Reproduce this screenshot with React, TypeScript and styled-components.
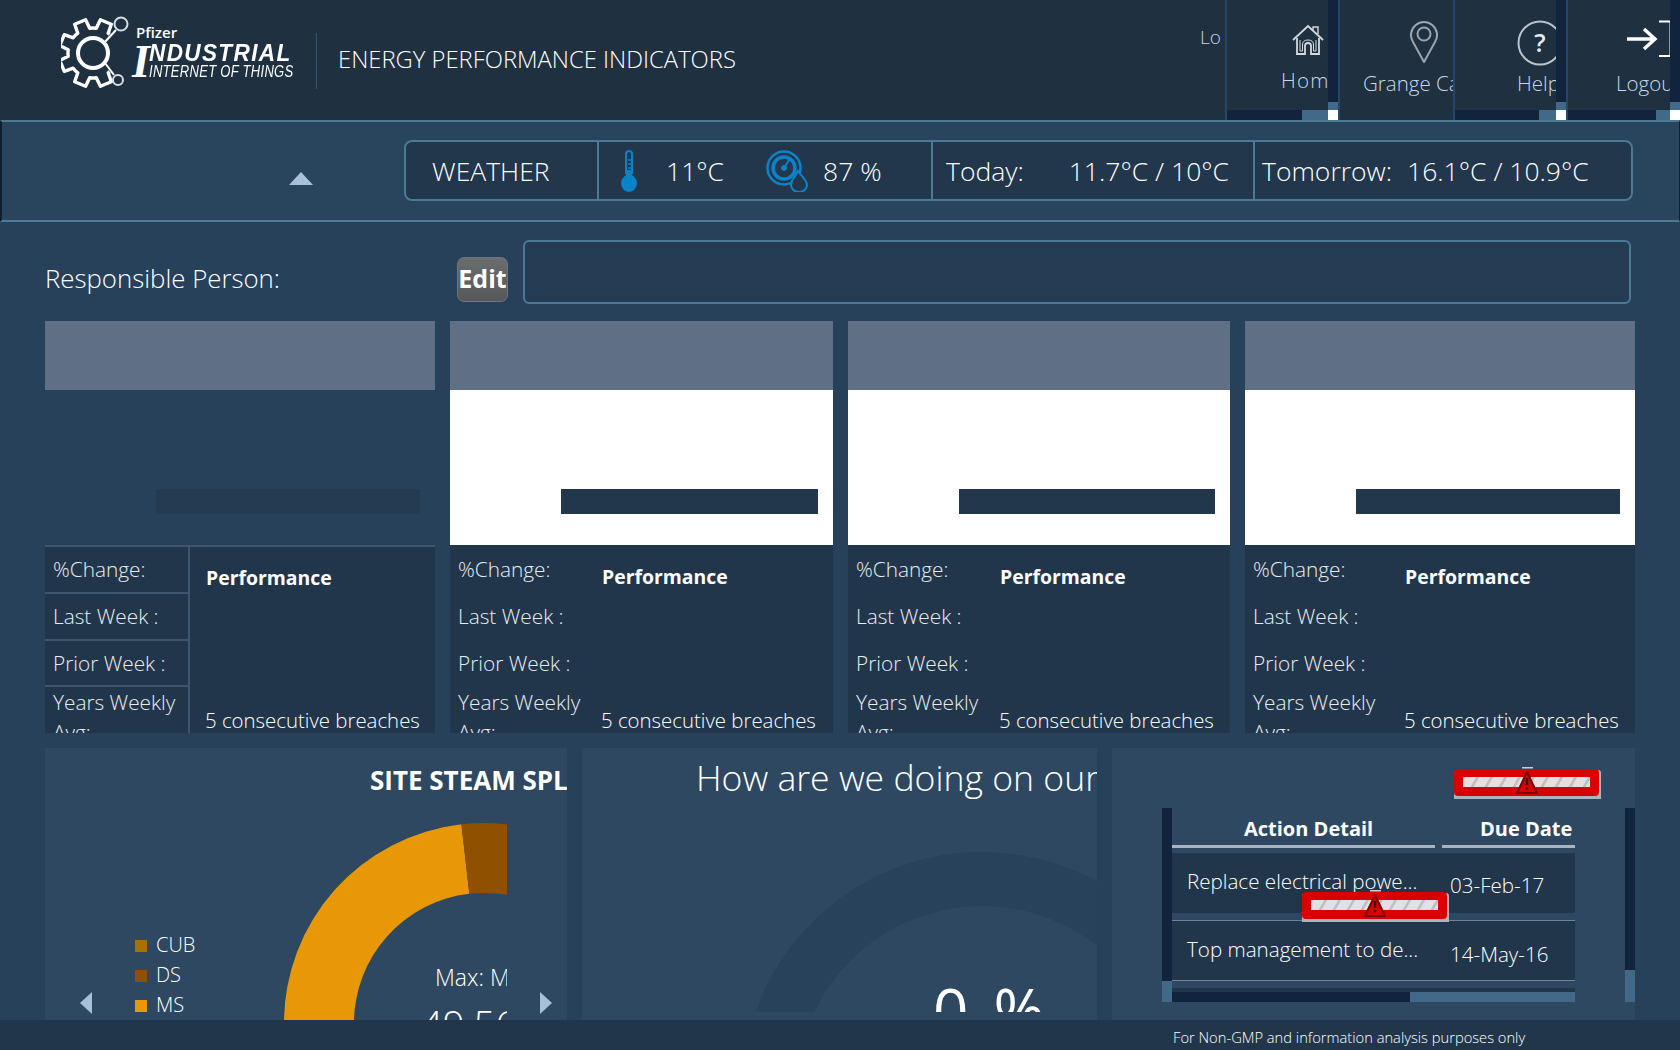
import React from 'react'
import styled, { createGlobalStyle } from 'styled-components'

const GlobalStyle = createGlobalStyle`
  html, body { margin: 0; padding: 0; background: #22364b; }
  body { font-family: "Open Sans", "Noto Sans", sans-serif; color: #fff; }
  * { box-sizing: border-box; }
`

const Page = styled.div`
  width: 1680px;
  height: 1050px;
  overflow: hidden;
  background: #27415a;
  display: flex;
  flex-direction: column;
`

/* header */
const Header = styled.header`
  height: 120px;
  flex: none;
  background: #1f3041;
  display: flex;
  padding-left: 61px;
`
const Logo = styled.div`
  width: 255px;
  flex: none;
  display: flex;
  padding-top: 15px;
`
const LogoText = styled.div`
  margin-top: 10px;
  margin-left: -1px;
  display: flex;
  flex-direction: column;
`
const LogoBrand = styled.span`
  font-size: 15px;
  line-height: 15px;
  font-weight: 600;
  margin-left: 4px;
`
const LogoRow = styled.div`
  display: flex;
  margin-top: 2px;
`
const LogoBigI = styled.span`
  font-family: "Liberation Serif", serif;
  font-style: italic;
  font-weight: 700;
  font-size: 46px;
  line-height: 40px;
  width: 17px;
`
const LogoStack = styled.div`
  display: flex;
  flex-direction: column;
  width: 144px;
  font-family: "Liberation Sans", sans-serif;
  font-style: italic;
  white-space: nowrap;
`
const LogoTop = styled.span`
  font-size: 23px;
  line-height: 22px;
  font-weight: 700;
  letter-spacing: 1.4px;
  transform: scaleX(0.98);
  transform-origin: left center;
`
const LogoBottom = styled.span`
  font-size: 16.5px;
  line-height: 14px;
  letter-spacing: 0.35px;
  transform: scaleX(0.79);
  transform-origin: left center;
`
const HeaderRule = styled.div`
  width: 1px;
  height: 56px;
  margin-top: 33px;
  background: #2f5672;
`
const HeaderTitle = styled.h1`
  margin: 43px 0 0 21px;
  font-size: 23.8px;
  line-height: 32px;
  font-weight: 300;
  white-space: nowrap;
`
const HeaderStub = styled.div`
  margin-left: auto;
  width: 25px;
  padding-top: 23px;
  font-size: 19px;
  line-height: 28px;
  font-weight: 300;
  color: #c6d8ea;
  overflow: hidden;
  flex: none;
`
const NavItem = styled.div<{ $w: number; $scroll?: boolean }>`
  flex: none;
  width: ${(p) => p.$w}px;
  border-left: 2px solid #27476a;
  display: grid;
  grid-template-columns: ${(p) => (p.$scroll ? 'minmax(0, 1fr) 10px' : 'minmax(0, 1fr)')};
  grid-template-rows: ${(p) => (p.$scroll ? 'minmax(0, 1fr) 10px' : 'minmax(0, 1fr)')};
`
const NavBody = styled.div`
  min-width: 0;
  overflow: hidden;
`
const NavIcon = styled.div<{ $left: number; $top: number }>`
  margin: ${(p) => p.$top}px 0 0 ${(p) => p.$left}px;
  height: 48px;
  display: flex;
  align-items: flex-start;
`
const NavLabel = styled.div<{ $left: number; $top?: number; $spread?: number }>`
  margin: ${(p) => p.$top ?? 0}px 0 0 ${(p) => p.$left}px;
  font-size: 20.5px;
  line-height: 26px;
  font-weight: 300;
  letter-spacing: ${(p) => p.$spread ?? 0}px;
  color: #c6d8ea;
  white-space: nowrap;
`
const ScrollV = styled.div`
  display: flex;
  flex-direction: column;
  background: #12233d;
  &::after {
    content: '';
    margin-top: auto;
    height: 8px;
    background: #426a88;
  }
`
const ScrollH = styled.div<{ $thumb: number }>`
  display: flex;
  background: #12233d;
  &::after {
    content: '';
    margin-left: auto;
    width: ${(p) => p.$thumb}px;
    background: #426a88;
  }
`
const ScrollCorner = styled.div`
  background: #fff;
`

/* weather bar */
const Toolbar = styled.section`
  height: 102px;
  flex: none;
  background: #29455e;
  border-top: 2px solid #4a7a94;
  border-bottom: 2px solid #4a7a94;
  border-left: 2px solid #10202e;
  border-right: 1px solid #10202e;
  display: flex;
  align-items: center;
  padding-left: 287px;
`
const Collapse = styled.div`
  width: 0;
  height: 0;
  margin-top: 14px;
  border-left: 12px solid transparent;
  border-right: 12px solid transparent;
  border-bottom: 13px solid #a8c0d8;
`
const WeatherBox = styled.div`
  margin-left: 91px;
  margin-top: -1px;
  width: 1229px;
  height: 61px;
  display: flex;
  align-items: stretch;
  background: #22364c;
  border: 2px solid #4a7a94;
  border-radius: 8px;
`
const WeatherCell = styled.div<{ $w: number; $pad: number; $last?: boolean }>`
  width: ${(p) => p.$w}px;
  flex: ${(p) => (p.$last ? '1' : 'none')};
  padding-left: ${(p) => p.$pad}px;
  border-right: ${(p) => (p.$last ? 'none' : '2px solid #4a7a94')};
  display: flex;
  align-items: center;
  font-size: 26.5px;
  font-weight: 300;
  white-space: nowrap;
`
const WeatherValue = styled.span<{ $left: number }>`
  margin-left: ${(p) => p.$left}px;
`

/* main */
const Main = styled.main`
  flex: 1;
  min-height: 0;
  padding: 18px 45px 0;
  display: flex;
  flex-direction: column;
`
const PersonRow = styled.div`
  height: 64px;
  flex: none;
  display: flex;
  align-items: center;
`
const PersonLabel = styled.div`
  width: 412px;
  padding-top: 12px;
  font-size: 25.8px;
  font-weight: 300;
  white-space: nowrap;
`
const EditButton = styled.button`
  width: 51px;
  height: 45px;
  margin-top: 15px;
  padding: 0 0 2px;
  border: 1px solid #6a7683;
  border-radius: 7px;
  background: linear-gradient(#6b6d6f, #555759);
  color: #fff;
  font: 700 25px/1 "Open Sans", sans-serif;
  overflow: hidden;
  white-space: nowrap;
`
const PersonInput = styled.div`
  margin-left: 15px;
  width: 1108px;
  height: 64px;
  background: #243d55;
  border: 2px solid #4a7a94;
  border-radius: 6px;
`
const Cards = styled.div`
  margin-top: 17px;
  display: grid;
  grid-template-columns: 390px 383px 382px 390px;
  column-gap: 15px;
`
const Card = styled.article`
  display: flex;
  flex-direction: column;
  height: 412px;
`
const CardHead = styled.div`
  height: 69px;
  flex: none;
  background: #5f7085;
`
const CardMedia = styled.div<{ $blank?: boolean; $bar: number }>`
  height: 155px;
  flex: none;
  background: ${(p) => (p.$blank ? 'transparent' : '#fff')};
  padding: 99px 15px 0 0;
  display: flex;
  justify-content: flex-end;
  &::after {
    content: '';
    width: ${(p) => p.$bar}px;
    height: 25px;
    background: ${(p) => (p.$blank ? '#243b52' : '#22364c')};
  }
`
const CardTable = styled.div<{ $lined?: boolean }>`
  flex: 1;
  min-height: 0;
  overflow: hidden;
  background: #22364b;
  display: grid;
  grid-template-columns: 145px minmax(0, 1fr);
  grid-template-rows: minmax(0, 1fr);
  border-top: ${(p) => (p.$lined ? '2px solid #3e566e' : 'none')};
`
const MetricCol = styled.div<{ $lined?: boolean }>`
  overflow: hidden;
  border-right: ${(p) => (p.$lined ? '2px solid #3e566e' : 'none')};
`
const Metric = styled.div<{ $lined?: boolean; $h: number }>`
  height: ${(p) => p.$h}px;
  padding: ${(p) => (p.$lined ? 6 : 8)}px 0 0 8px;
  font-size: 20.8px;
  line-height: 33px;
  font-weight: 300;
  border-bottom: ${(p) => (p.$lined ? '2px solid #3e566e' : 'none')};
  color: #e8edf2;
  overflow: hidden;
`
const MetricWide = styled(Metric)`
  height: auto;
  padding-top: ${(p) => (p.$lined ? 0 : 2)}px;
  padding-right: 10px;
  line-height: 30px;
  border: none;
`
const PerfCol = styled.div<{ $pad: number }>`
  min-width: 0;
  overflow: hidden;
  display: flex;
  flex-direction: column;
  padding-left: ${(p) => p.$pad}px;
`
const PerfTitle = styled.div<{ $lined?: boolean }>`
  margin-top: ${(p) => (p.$lined ? 16 : 17)}px;
  font-size: 19.4px;
  line-height: 30px;
  font-weight: 700;
`
const PerfNote = styled.div`
  margin-top: auto;
  margin-left: -1px;
  height: 26px;
  flex: none;
  font-size: 20.4px;
  line-height: 26px;
  font-weight: 300;
  white-space: nowrap;
`

/* bottom panels */
const Panels = styled.div`
  margin-top: 15px;
  display: grid;
  grid-template-columns: 522px 515px 523px;
  column-gap: 15px;
`
const Panel = styled.section`
  position: relative;
  height: 272px;
  background: #2d4860;
  overflow: hidden;
`
const SteamTitle = styled.h2`
  height: 66px;
  margin: 0;
  padding: 14px 0 0 325px;
  font-size: 26px;
  line-height: 36px;
  font-weight: 700;
  white-space: nowrap;
  overflow: hidden;
`
const SteamBody = styled.div`
  display: flex;
  height: 206px;
  padding-left: 35px;
`
const PageArrow = styled.div<{ $right?: boolean }>`
  flex: none;
  width: 0;
  height: 0;
  margin-top: 178px;
  border-top: 11px solid transparent;
  border-bottom: 11px solid transparent;
  border-left: ${(p) => (p.$right ? '12px solid #a8c0d8' : 'none')};
  border-right: ${(p) => (p.$right ? 'none' : '12px solid #a8c0d8')};
`
const Legend = styled.ul`
  list-style: none;
  margin: 115px 0 0 43px;
  padding: 0;
  width: 135px;
  flex: none;
`
const LegendItem = styled.li`
  height: 30px;
  display: flex;
  align-items: center;
  gap: 9px;
  font-size: 20px;
  font-weight: 300;
`
const LegendSwatch = styled.i<{ $color: string }>`
  width: 12px;
  height: 12px;
  margin-top: 3px;
  background: ${(p) => p.$color};
`
const DonutBox = styled.div`
  position: relative;
  flex: none;
  width: 237px;
  height: 206px;
  overflow: hidden;
  margin-right: 33px;
`
const DonutMax = styled.span`
  position: absolute;
  left: 165px;
  top: 148px;
  font-size: 23px;
  line-height: 30px;
  font-weight: 300;
  white-space: nowrap;
`
const DonutValue = styled.span`
  position: absolute;
  left: 151px;
  top: 185px;
  font-size: 38px;
  line-height: 50px;
  font-weight: 300;
  white-space: nowrap;
`
const GaugeTitle = styled.h2`
  height: 70px;
  margin: 0;
  padding: 4px 0 0 114px;
  font-size: 35.6px;
  line-height: 50px;
  font-weight: 300;
  white-space: nowrap;
  overflow: hidden;
`
const GaugeBox = styled.div`
  position: relative;
  height: 194px;
  overflow: hidden;
`
const GaugeValue = styled.span`
  position: absolute;
  left: 351px;
  top: 155px;
  font-size: 62px;
  line-height: 74px;
  font-weight: 400;
  word-spacing: 9px;
  white-space: pre;
`
const ActionFrame = styled.div`
  margin-top: 60px;
  margin-left: 50px;
  width: 473px;
  height: 194px;
  display: grid;
  grid-template-columns: 10px 403px 50px 10px;
`
const TrackV = styled.div<{ $thumb: number }>`
  display: flex;
  flex-direction: column;
  background: #12233d;
  &::after {
    content: '';
    margin-top: auto;
    height: ${(p) => p.$thumb}px;
    background: #426a88;
  }
`
const ActionGrid = styled.div`
  display: flex;
  flex-direction: column;
  min-width: 0;
`
const ActionHeads = styled.div`
  display: flex;
  gap: 7px;
  height: 40px;
  flex: none;
`
const ActionHead = styled.div<{ $w: number; $pad: number }>`
  width: ${(p) => p.$w}px;
  padding: 4px 0 0 ${(p) => p.$pad}px;
  border-bottom: 3px solid #a8b4c0;
  font-size: 20px;
  line-height: 33px;
  font-weight: 700;
  white-space: nowrap;
  overflow: hidden;
`
const ActionRow = styled.div<{ $mt: number; $mb: number; $h: number }>`
  height: ${(p) => p.$h}px;
  margin-top: ${(p) => p.$mt}px;
  margin-bottom: ${(p) => p.$mb}px;
  flex: none;
  background: #22364b;
  display: flex;
  font-size: 20.6px;
  font-weight: 300;
  white-space: nowrap;
`
const ActionText = styled.div<{ $top: number }>`
  width: 278px;
  padding: ${(p) => p.$top}px 0 0 15px;
  line-height: 30px;
`
const ActionDate = styled.div<{ $top: number }>`
  padding-top: ${(p) => p.$top}px;
  line-height: 30px;
`
const ActionRule = styled.div`
  height: 1px;
  flex: none;
  background: #6d8699;
`
const ActionFoot = styled.div`
  margin-top: 7px;
  height: 4px;
  flex: none;
  background: #22364b;
`
const TrackH = styled.div`
  height: 10px;
  margin-top: auto;
  flex: none;
  background: #426a88;
  &::before {
    content: '';
    display: block;
    width: 238px;
    height: 10px;
    background: #12233d;
  }
`
const BadgeSlot = styled.div<{ $left: number; $top: number }>`
  position: absolute;
  left: ${(p) => p.$left}px;
  top: ${(p) => p.$top}px;
  width: 147px;
  height: 32px;
`
const Footer = styled.footer`
  height: 30px;
  flex: none;
  background: #22364b;
  padding-left: 1173px;
  font-size: 14.7px;
  line-height: 34px;
  font-weight: 300;
  white-space: nowrap;
`

const polar = (r: number, deg: number) => {
  const a = (deg * Math.PI) / 180
  return `${(32 + r * Math.cos(a)).toFixed(1)} ${(38 + r * Math.sin(a)).toFixed(1)}`
}

const gearPath = () => {
  let d = `M${polar(25, 48)}`
  ;[67.5, 112.5, 157.5, 202.5, 247.5, 292.5].forEach((a) => {
    d += ` A25 25 0 0 1 ${polar(25, a - 15)} L${polar(34, a - 10)} L${polar(34, a + 10)} L${polar(25, a + 15)}`
  })
  d += ` A25 25 0 0 1 ${polar(25, 312)}`
  return d
}

const GearLogo = () => (
  <svg width="72" height="76" viewBox="0 0 72 76" fill="none" stroke="#fff" strokeWidth="3.4" style={{ flex: 'none' }}>
    <path d={gearPath()} strokeLinejoin="round" />
    <circle cx="32" cy="38" r="15" strokeWidth="4" />
    <path d="M43 28 L55 15" strokeWidth="2" />
    <circle cx="60" cy="9" r="6.5" strokeWidth="2" stroke="#d7dde3" />
    <path d="M44 48 L53 60" strokeWidth="2" />
    <circle cx="57" cy="65" r="5" strokeWidth="2" stroke="#d7dde3" />
  </svg>
)

const HomeIcon = () => (
  <svg width="32" height="32" viewBox="0 0 32 32" fill="none" stroke="#d4d9de" strokeWidth="1.8">
    <path d="M1 16 L16 2 L31 16" />
    <path d="M21 6 V3 H26 V10" strokeWidth="1.4" />
    <path d="M5 14 V30 H13 V22 Q13 19 16 19 Q19 19 19 22 V30 H27 V14" />
    <path d="M8 16 V27 H10.5 V21 Q10.5 16 16 16 Q21.5 16 21.5 21 V27 H24 V16" strokeWidth="1" />
  </svg>
)

const PinIcon = () => (
  <svg width="28" height="44" viewBox="0 0 28 44" fill="none" stroke="#9aa5ae" strokeWidth="2">
    <path d="M14 42 L3 22 A13 13 0 1 1 25 22 Z" strokeLinejoin="round" />
    <circle cx="14" cy="14" r="6.5" />
  </svg>
)

const HelpIcon = () => (
  <svg width="46" height="46" viewBox="0 0 46 46" style={{ flex: 'none' }}>
    <circle cx="23" cy="23" r="21.5" fill="none" stroke="#bcc4cb" strokeWidth="2" />
    <text x="23" y="32" textAnchor="middle" fontFamily="Open Sans, sans-serif" fontWeight="600" fontSize="25" fill="#e8ecef">?</text>
  </svg>
)

const LogoutIcon = () => (
  <svg width="46" height="40" viewBox="0 0 46 40" fill="none" stroke="#fff" style={{ flex: 'none' }}>
    <path d="M1 19 H28 M18 9 L29 19 L18 29" strokeWidth="3.4" />
    <path d="M33 1.5 H44.5 V36 H33" strokeWidth="2" />
  </svg>
)

const ThermoIcon = () => (
  <svg width="16" height="42" viewBox="0 0 16 42" style={{ flex: 'none' }}>
    <path d="M5 24 V4 A3 3 0 0 1 11 4 V24" fill="#1d3a55" stroke="#0b83c9" strokeWidth="2" />
    <path d="M7 10 H11 M7 14 H11 M7 18 H11" stroke="#0b83c9" strokeWidth="1.3" />
    <path d="M5 20 H11 V25 C14 27 16 30 16 33 C16 38 12 42 8 42 C4 42 0 38 0 33 C0 30 2 27 5 25 Z" fill="#0b83c9" />
  </svg>
)

const HumidityIcon = () => (
  <svg width="42" height="42" viewBox="0 0 42 42" fill="none" stroke="#0b83c9" style={{ display: 'block' }}>
    <circle cx="18" cy="18" r="16.5" strokeWidth="2.5" />
    <circle cx="18" cy="18" r="11" strokeWidth="3.5" />
    <path d="M18 18 L23 10" strokeWidth="2" />
    <circle cx="18" cy="18" r="2.5" fill="#0b83c9" />
    <path d="M32 21 C36 27 41 30 41 35 A8 7 0 0 1 25 35 C25 30 29 27 32 21 Z" fill="#22364c" strokeWidth="2" />
  </svg>
)

const SteamDonut = () => (
  <svg width="237" height="206" viewBox="0 0 237 206">
    <path d="M14 209 A200 200 0 0 1 191.4 10.3 L199.3 79.8 A130 130 0 0 0 84 209 Z" fill="#e89806" />
    <path d="M191.4 10.3 A200 200 0 0 1 314 36 L279 96.4 A130 130 0 0 0 199.3 79.8 Z" fill="#8f5000" />
  </svg>
)

const GaugeArc = () => (
  <svg width="515" height="194" viewBox="0 0 515 194" fill="none">
    <circle cx="400" cy="274" r="213" stroke="#27425a" strokeWidth="54" />
  </svg>
)

const WarningBadge = ({ id }: { id: string }) => (
  <svg width="147" height="32" viewBox="0 0 147 32">
    <defs>
      <pattern id={id} width="14" height="10" patternUnits="userSpaceOnUse" patternTransform="skewX(-30)">
        <rect width="14" height="10" fill="#e2e0e0" />
        <rect width="3" height="10" fill="#c2bebe" />
      </pattern>
      <filter id={`${id}-soft`} x="-5%" y="-20%" width="110%" height="140%">
        <feGaussianBlur stdDeviation="0.6" />
      </filter>
    </defs>
    <path d="M3 3 H144 Q147 3 147 6 V32 H0 V6 Q0 3 3 3 Z" fill="#aab4bd" />
    <rect x="0" y="2" width="145" height="27" rx="4" fill="#d90000" />
    <rect x="9" y="10" width="127" height="10" fill={`url(#${id})`} filter={`url(#${id}-soft)`} />
    <rect x="68" y="0" width="11" height="1.5" fill="#c8d0d6" />
    <path d="M73 5 L83 26 H63 Z" fill="#d90000" stroke="#7a0000" strokeWidth="2" strokeLinejoin="round" />
    <rect x="71.8" y="11" width="2.4" height="7" fill="#300" />
    <rect x="71.8" y="20" width="2.4" height="2.4" fill="#300" />
  </svg>
)

const cards = [
  { blank: true, lined: true, bar: 264, pad: 16 },
  { bar: 257, pad: 7 },
  { bar: 256, pad: 7 },
  { bar: 264, pad: 15 },
]

const App: React.FC = () => (
  <Page>
    <GlobalStyle />
    <Header>
      <Logo>
        <GearLogo />
        <LogoText>
          <LogoBrand>Pfizer</LogoBrand>
          <LogoRow>
            <LogoBigI>I</LogoBigI>
            <LogoStack>
              <LogoTop>NDUSTRIAL</LogoTop>
              <LogoBottom>INTERNET OF THINGS</LogoBottom>
            </LogoStack>
          </LogoRow>
        </LogoText>
      </Logo>
      <HeaderRule />
      <HeaderTitle>ENERGY PERFORMANCE INDICATORS</HeaderTitle>
      <HeaderStub>Lo</HeaderStub>
      <NavItem $w={113} $scroll>
        <NavBody>
          <NavIcon $left={65} $top={24}><HomeIcon /></NavIcon>
          <NavLabel $left={54} $top={-5} $spread={1.2}>Home</NavLabel>
        </NavBody>
        <ScrollV />
        <ScrollH $thumb={26} />
        <ScrollCorner />
      </NavItem>
      <NavItem $w={115}>
        <NavBody>
          <NavIcon $left={70} $top={20}><PinIcon /></NavIcon>
          <NavLabel $left={23} $top={2}>Grange Castle</NavLabel>
        </NavBody>
      </NavItem>
      <NavItem $w={113} $scroll>
        <NavBody>
          <NavIcon $left={62} $top={20}><HelpIcon /></NavIcon>
          <NavLabel $left={62} $top={2}>Help</NavLabel>
        </NavBody>
        <ScrollV />
        <ScrollH $thumb={17} />
        <ScrollCorner />
      </NavItem>
      <NavItem $w={114} $scroll>
        <NavBody>
          <NavIcon $left={58} $top={20}><LogoutIcon /></NavIcon>
          <NavLabel $left={48} $top={2}>Logout</NavLabel>
        </NavBody>
        <ScrollV />
        <ScrollH $thumb={14} />
        <ScrollCorner />
      </NavItem>
    </Header>

    <Toolbar>
      <Collapse />
      <WeatherBox>
        <WeatherCell $w={193} $pad={26}>WEATHER</WeatherCell>
        <WeatherCell $w={334} $pad={22}>
          <ThermoIcon />
          <WeatherValue $left={29}>11°C</WeatherValue>
          <WeatherValue $left={42}><HumidityIcon /></WeatherValue>
          <WeatherValue $left={15}>87 %</WeatherValue>
        </WeatherCell>
        <WeatherCell $w={322} $pad={13}>
          Today:
          <WeatherValue $left={45}>11.7°C / 10°C</WeatherValue>
        </WeatherCell>
        <WeatherCell $w={0} $pad={7} $last>
          Tomorrow:
          <WeatherValue $left={15}>16.1°C / 10.9°C</WeatherValue>
        </WeatherCell>
      </WeatherBox>
    </Toolbar>

    <Main>
      <PersonRow>
        <PersonLabel>Responsible Person:</PersonLabel>
        <EditButton>Edit</EditButton>
        <PersonInput />
      </PersonRow>
      <Cards>
        {cards.map((card, i) => (
          <Card key={i}>
            <CardHead />
            <CardMedia $blank={card.blank} $bar={card.bar} />
            <CardTable $lined={card.lined}>
              <MetricCol $lined={card.lined}>
                <Metric $lined={card.lined} $h={47}>%Change:</Metric>
                <Metric $lined={card.lined} $h={47}>Last Week :</Metric>
                <Metric $lined={card.lined} $h={46}>Prior Week :</Metric>
                <MetricWide $lined={card.lined} $h={47}>Years Weekly Avg:</MetricWide>
              </MetricCol>
              <PerfCol $pad={card.pad}>
                <PerfTitle $lined={card.lined}>Performance</PerfTitle>
                <PerfNote>5 consecutive breaches</PerfNote>
              </PerfCol>
            </CardTable>
          </Card>
        ))}
      </Cards>
      <Panels>
        <Panel>
          <SteamTitle>SITE STEAM SPLIT</SteamTitle>
          <SteamBody>
            <PageArrow />
            <Legend>
              <LegendItem><LegendSwatch $color="#a87000" />CUB</LegendItem>
              <LegendItem><LegendSwatch $color="#8f5000" />DS</LegendItem>
              <LegendItem><LegendSwatch $color="#e89806" />MS</LegendItem>
            </Legend>
            <DonutBox>
              <SteamDonut />
              <DonutMax>Max: MS</DonutMax>
              <DonutValue>49.56</DonutValue>
            </DonutBox>
            <PageArrow $right />
          </SteamBody>
        </Panel>
        <Panel>
          <GaugeTitle>How are we doing on our targets?</GaugeTitle>
          <GaugeBox>
            <GaugeArc />
            <GaugeValue>0 %</GaugeValue>
          </GaugeBox>
        </Panel>
        <Panel>
          <ActionFrame>
            <TrackV $thumb={21} />
            <ActionGrid>
              <ActionHeads>
                <ActionHead $w={263} $pad={72}>Action Detail</ActionHead>
                <ActionHead $w={133} $pad={38}>Due Date</ActionHead>
              </ActionHeads>
              <ActionRow $mt={5} $mb={7} $h={60}>
                <ActionText $top={13}>Replace electrical powe...</ActionText>
                <ActionDate $top={17}>03-Feb-17</ActionDate>
              </ActionRow>
              <ActionRule />
              <ActionRow $mt={0} $mb={0} $h={59}>
                <ActionText $top={13}>Top management to de...</ActionText>
                <ActionDate $top={18}>14-May-16</ActionDate>
              </ActionRow>
              <ActionRule />
              <ActionFoot />
              <TrackH />
            </ActionGrid>
            <div />
            <TrackV $thumb={32} />
          </ActionFrame>
          <BadgeSlot $left={342} $top={19}><WarningBadge id="hazard-a" /></BadgeSlot>
          <BadgeSlot $left={190} $top={142}><WarningBadge id="hazard-b" /></BadgeSlot>
        </Panel>
      </Panels>
    </Main>
    <Footer>For Non-GMP and information analysis purposes only</Footer>
  </Page>
)

export default App
